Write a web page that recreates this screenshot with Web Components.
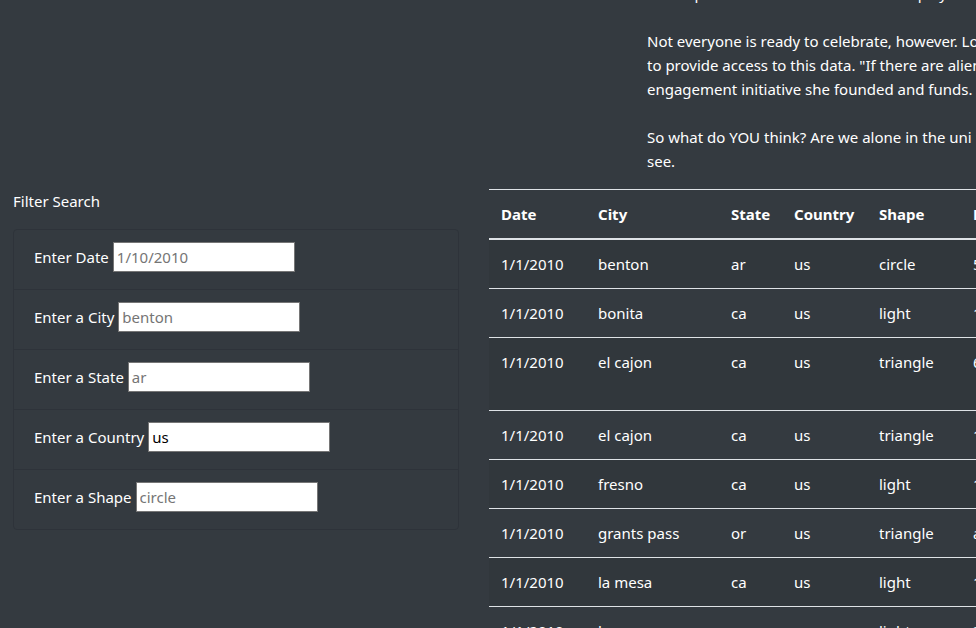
<!DOCTYPE html>
<html lang="en">
<head>
<meta charset="utf-8">
<title>UFO Sightings</title>
<style>
  html, body { height: 100%; }
  body {
    margin: 0;
    overflow: hidden;
    background: #343a40;
    color: #fff;
    font: 15px/24px "Noto Sans", "Open Sans", sans-serif;
  }
</style>
</head>
<body>
<sighting-page>
  <news-article slot="article">
    <p>new reports and evidence from the display</p>
    <p>Not everyone is ready to celebrate, however. Lo<br>to provide access to this data. "If there are alien<br>engagement initiative she founded and funds.</p>
    <p>So what do YOU think? Are we alone in the uni<br>see.</p>
  </news-article>
  <filter-panel slot="filters" heading="Filter Search">
    <filter-field label="Enter Date" placeholder="1/10/2010"></filter-field>
    <filter-field label="Enter a City" placeholder="benton"></filter-field>
    <filter-field label="Enter a State" placeholder="ar"></filter-field>
    <filter-field label="Enter a Country" value="us" placeholder="us"></filter-field>
    <filter-field label="Enter a Shape" placeholder="circle"></filter-field>
  </filter-panel>
  <sighting-table slot="results"></sighting-table>
</sighting-page>

<script>
  class BaseElement extends HTMLElement {
    render(html) {
      const t = document.createElement('template');
      t.innerHTML = html;
      this.attachShadow({ mode: 'open' }).append(t.content.cloneNode(true));
    }
  }

  customElements.define('sighting-page', class extends BaseElement {
    connectedCallback() {
      this.render(`
        <style>
          :host { display: block; height: 100%; overflow: hidden; }
          header { display: grid; grid-template-columns: 1fr 329px; margin-top: -19px; }
          header slot { grid-column: 2; display: block; min-width: 0; }
          main { display: grid; grid-template-columns: minmax(0, 1fr) minmax(0, 1fr); column-gap: 2px; align-items: start; }
        </style>
        <header><slot name="article"></slot></header>
        <main><slot name="filters"></slot><slot name="results"></slot></main>`);
    }
  });

  customElements.define('news-article', class extends BaseElement {
    connectedCallback() {
      this.render(`
        <style>
          :host { display: block; overflow: hidden; white-space: nowrap; padding-bottom: 16px; }
          ::slotted(p) { margin: 0 0 24px; }
          ::slotted(p:last-of-type) { margin: 0; }
        </style>
        <slot></slot>`);
    }
  });

  customElements.define('filter-panel', class extends BaseElement {
    connectedCallback() {
      this.render(`
        <style>
          :host { display: block; padding: 0 28px 0 13px; }
          p { margin: 0 0 16px; }
          form { border: 1px solid #2e333a; border-radius: 4px; }
          ::slotted(:not(:first-child)) { border-top: 1px solid #2e333a; }
        </style>
        <p>${this.getAttribute('heading')}</p>
        <form><slot></slot></form>`);
    }
  });

  customElements.define('filter-field', class extends BaseElement {
    connectedCallback() {
      this.render(`
        <style>
          :host { display: flex; align-items: center; gap: 4px; padding: 12px 20px 17px; }
          label { line-height: 30px; }
          input {
            box-sizing: border-box; width: 182px; height: 30px; min-width: 0;
            padding: 1px 3px; border: 1px solid #767676; border-radius: 0;
            background: #fff; color: #000; font: inherit; outline: none;
          }
          input::placeholder { color: #757575; opacity: 1; }
        </style>
        <label for="field">${this.getAttribute('label')}</label>
        <input id="field" type="text" placeholder="${this.getAttribute('placeholder')}" value="${this.getAttribute('value') || ''}">`);
    }
  });

  const columns = [['Date', 97], ['City', 133], ['State', 63], ['Country', 85], ['Shape', 94], ['Duration', 120], ['Comments', 320]];
  const sightings = [
    ['1/1/2010', 'benton', 'ar', 'us', 'circle', '5 mins.', 'Bright circle over the trees'],
    ['1/1/2010', 'bonita', 'ca', 'us', 'light', '13 minutes', 'Three lights in the sky'],
    ['1/1/2010', 'el cajon', 'ca', 'us', 'triangle', '6 minutes', 'Triangle of red lights moving slowly<br>to the north'],
    ['1/1/2010', 'el cajon', 'ca', 'us', 'triangle', '12 minutes', 'Red lights in a triangle'],
    ['1/1/2010', 'fresno', 'ca', 'us', 'light', '10 minutes', 'Orange lights'],
    ['1/1/2010', 'grants pass', 'or', 'us', 'triangle', 'an hour', 'Lights above the hills'],
    ['1/1/2010', 'la mesa', 'ca', 'us', 'light', '10 minutes', 'Red lights'],
    ['1/1/2010', 'lemoore', 'ca', 'us', 'light', '3 minutes', 'White light']
  ];

  customElements.define('sighting-table', class extends BaseElement {
    connectedCallback() {
      this.render(`
        <style>
          :host { display: block; overflow: hidden; }
          table { table-layout: fixed; width: 912px; border-collapse: collapse; }
          th, td { padding: 12px; border-top: 1px solid #dee2e6; text-align: left; vertical-align: top; }
          thead th { border-bottom: 2px solid #dee2e6; font-weight: 700; }
          tbody tr:nth-of-type(odd) { background: rgba(0, 0, 0, .05); }
        </style>
        <table>
          <colgroup>${columns.map(c => `<col style="width:${c[1]}px">`).join('')}</colgroup>
          <thead><tr>${columns.map(c => `<th scope="col">${c[0]}</th>`).join('')}</tr></thead>
          <tbody>${sightings.map(r => `<tr>${r.map(v => `<td>${v}</td>`).join('')}</tr>`).join('')}</tbody>
        </table>`);
    }
  });
</script>
</body>
</html>
